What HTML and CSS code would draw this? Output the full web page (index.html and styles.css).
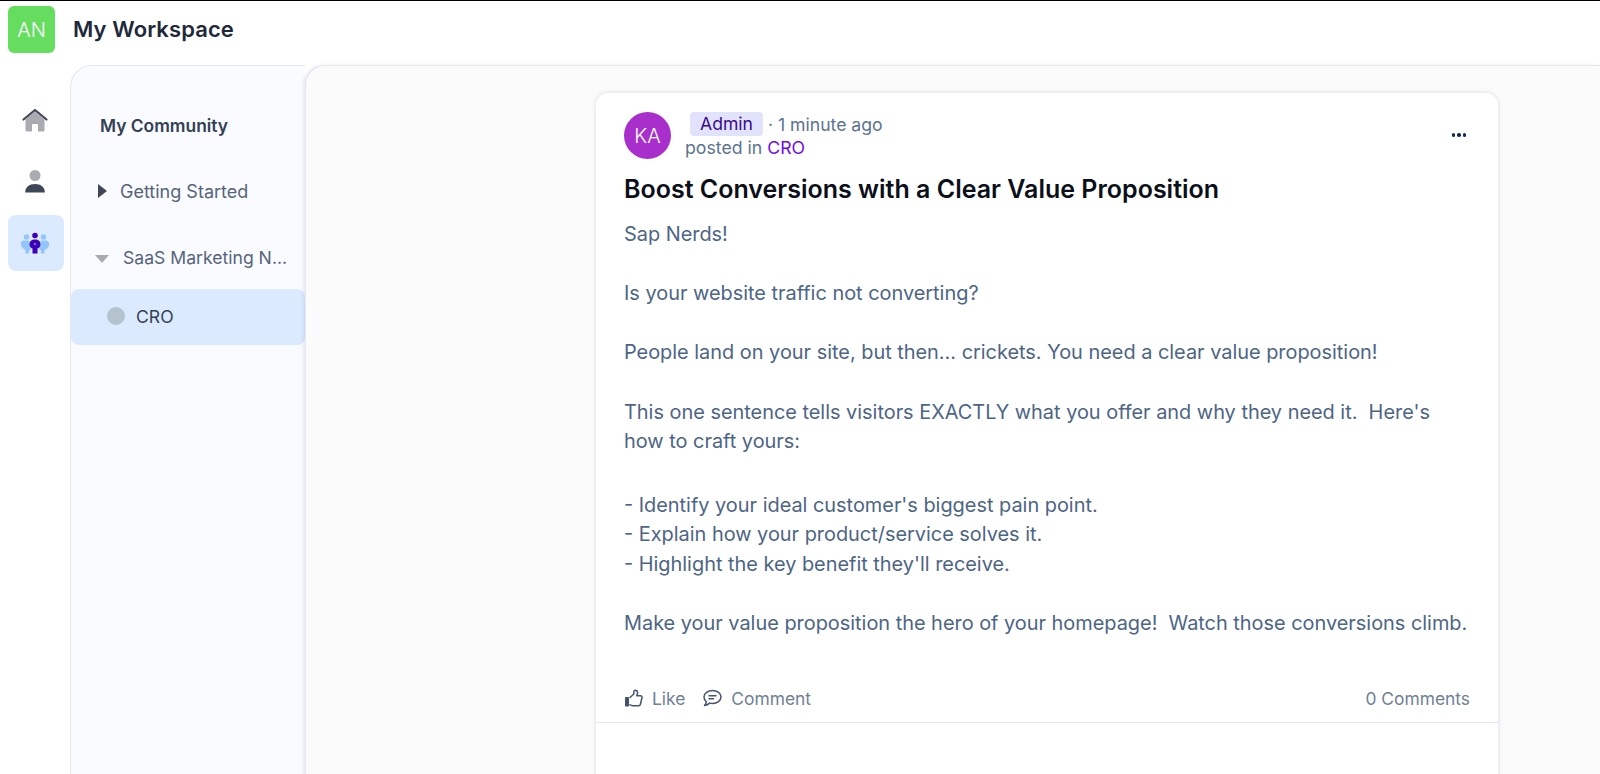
FILE: index.html
```html
<!DOCTYPE html>
<html lang="en">
<head>
<meta charset="utf-8">
<title>My Workspace</title>
<link rel="stylesheet" href="styles.css">
</head>
<body>
<header class="topbar">
  <div class="ws-avatar">AN</div>
  <h1 class="ws-title">My Workspace</h1>
</header>
<div class="shell">
  <nav class="rail">
    <a class="rail-item">
      <svg width="30" height="26" viewBox="0 0 30 26"><path d="M5.500 12.500 15 4.500l9.500 8V23a1.500 1.500 0 0 1-1.500 1.500h-5V18a1 1 0 0 0-1-1h-4a1 1 0 0 0-1 1v6.500H7A1.500 1.500 0 0 1 5.500 23z" fill="#a9abb0"/><path d="M3.500 12.500 15 3l11.500 9.500" fill="none" stroke="#3f4656" stroke-width="2.200" stroke-linecap="round" stroke-linejoin="round"/></svg>
    </a>
    <a class="rail-item">
      <svg width="24" height="26" viewBox="0 0 24 26"><circle cx="12" cy="7.500" r="5.500" fill="#a9abb0"/><path d="M2.200 24.500c0-5.500 4-8.500 9.800-8.500s9.800 3 9.800 8.500z" fill="#3f4656"/></svg>
    </a>
    <a class="rail-item rail-active">
      <svg width="30" height="24" viewBox="0 0 30 24"><g fill="#93c5fd"><circle cx="6.500" cy="6" r="2.700"/><circle cx="23.500" cy="6" r="2.700"/><path d="M3 9.500h6l2 9-2 1v3H5.500v-3.500C2.500 17.500.8 15.500.8 12.500.8 11 1.500 10 3 9.500z"/><path d="M27 9.500h-6l-2 9 2 1v3h3.500v-3.500c3-1 4.700-3 4.700-6 0-1.500-.7-2.500-2.200-3z"/></g><g fill="#3f00b5"><circle cx="15" cy="4.500" r="2.800"/><path d="M15 8.500c3.500 0 5.500 2 5.500 4.800 0 2.200-1.200 3.700-3 4.300v4.900h-5v-4.900c-1.800-.6-3-2.100-3-4.300 0-2.800 2-4.800 5.500-4.800z"/></g><circle cx="15" cy="13" r="1.300" fill="#93c5fd" opacity=".5"/></svg>
    </a>
  </nav>
  <aside class="community">
    <h2 class="community-title">My Community</h2>
    <div class="group group-closed">
      <span class="caret-right"></span>
      <span class="group-name">Getting Started</span>
    </div>
    <div class="group group-open">
      <span class="caret-down"></span>
      <span class="group-name">SaaS Marketing N...</span>
    </div>
    <div class="channel">
      <span class="channel-dot"></span>
      <span class="channel-name">CRO</span>
    </div>
  </aside>
  <main class="feed">
    <article class="post">
      <div class="post-head">
        <div class="author-avatar">KA</div>
        <div class="meta">
          <div class="meta-line"><span class="badge">Admin</span><span class="time">· 1 minute ago</span></div>
          <div class="posted">posted in <span class="channel-link">CRO</span></div>
        </div>
        <div class="more"><i></i><i></i><i></i></div>
      </div>
      <h3 class="post-title">Boost Conversions with a Clear Value Proposition</h3>
      <div class="post-body">
        <p>Sap Nerds!</p>
        <p>Is your website traffic not converting?</p>
        <p>People land on your site, but then... crickets. You need a clear value proposition!</p>
        <p>This one sentence tells visitors EXACTLY what you offer and why they need it.&nbsp; Here's how to craft yours:</p>
        <p class="list">- Identify your ideal customer's biggest pain point.<br>- Explain how your product/service solves it.<br>- Highlight the key benefit they'll receive.</p>
        <p>Make your value proposition the hero of your homepage!&nbsp; Watch those conversions climb.</p>
      </div>
      <div class="actions">
        <span class="action">
          <svg width="19" height="19" viewBox="0 0 19 19"><rect x="1" y="8" width="4" height="9.500" rx=".8" fill="#44546f"/><path d="M6 8.500 9.800 5V3c0-1 .6-1.700 1.500-1.700 1.300 0 2.200 1.100 2.200 2.500 0 1-.3 2-.8 3h3.800c1.100 0 1.800 1 1.500 2l-1.600 6.500c-.2.900-1 1.400-1.800 1.400H8.500c-1 0-1.800-.3-2.500-.9" fill="none" stroke="#44546f" stroke-width="1.500" stroke-linejoin="round" stroke-linecap="round"/></svg>
          Like
        </span>
        <span class="action">
          <svg width="19" height="19" viewBox="0 0 19 19"><path d="M9.500 1.500c4.600 0 8.500 2.800 8.500 6.500s-3.900 6.500-8.500 6.500c-1 0-2-.1-2.900-.4-1 1-2.700 2-5.100 2.300.9-1 1.600-2.200 1.800-3.600C1.900 11.600 1 9.900 1 8c0-3.700 3.900-6.500 8.500-6.500z" fill="none" stroke="#44546f" stroke-width="1.500" stroke-linejoin="round"/><path d="M6 6.700h7M6 9.700h4.500" stroke="#44546f" stroke-width="1.500" stroke-linecap="round"/></svg>
          Comment
        </span>
        <span class="count">0 Comments</span>
      </div>
    </article>
  </main>
</div>
</body>
</html>
```
FILE: styles.css
```css
* { box-sizing: border-box; }
html, body { height: 100%; }
body {
  margin: 0;
  height: 774px;
  overflow: hidden;
  background: #fff;
  font-family: Inter, "Liberation Sans", sans-serif;
  font-optical-sizing: none;
  border-top: 1px solid #000;
}
.topbar {
  height: 64px;
  display: flex;
  align-items: flex-start;
  padding: 5px 0 0 8px;
}
.ws-avatar {
  width: 47px;
  height: 47px;
  border-radius: 6px;
  background: #65dd5f;
  color: #fff;
  font-size: 20px;
  font-weight: 300;
  display: flex;
  align-items: center;
  justify-content: center;
}
.ws-title {
  margin: 0 0 0 18px;
  height: 47px;
  line-height: 47px;
  font-size: 22px;
  font-weight: 600;
  color: #1e293b;
  letter-spacing: .1px;
}
.shell {
  display: flex;
  height: 709px;
}
.rail {
  width: 70px;
  flex: none;
  padding: 27px 0 0 8px;
  display: flex;
  flex-direction: column;
}
.rail-item {
  width: 56px;
  height: 56px;
  display: flex;
  align-items: center;
  justify-content: center;
  border-radius: 8px;
  margin-bottom: 5px;
  padding-right: 2px;
}
.rail-active { background: #dbeafe; margin-top: 1px; }
.community {
  width: 235px;
  flex: none;
  background: #fafbfe;
  border: 1px solid #e2e8f0;
  border-bottom: 0;
  border-right: 0;
  border-top-left-radius: 22px;
  padding-top: 50px;
}
.community-title {
  margin: 0 0 0 29px;
  font-size: 17.400px;
  line-height: 20px;
  font-weight: 600;
  color: #334155;
}
.group {
  display: flex;
  align-items: center;
  height: 24px;
  color: #55647c;
}
.group-closed { margin: 43px 0 0 27px; font-size: 18px; }
.group-open { margin: 42px 0 0 24px; font-size: 17.600px; }
.caret-right {
  width: 0;
  height: 0;
  border-left: 9px solid #3f4656;
  border-top: 7.500px solid transparent;
  border-bottom: 7.500px solid transparent;
  margin-right: 13px;
}
.caret-down {
  width: 0;
  height: 0;
  border-top: 8px solid #a9abb0;
  border-left: 7.500px solid transparent;
  border-right: 7.500px solid transparent;
  margin-right: 14px;
  margin-top: 3px;
}
.channel {
  margin-top: 20px;
  height: 56px;
  background: #dbeafe;
  border-radius: 8px;
  display: flex;
  align-items: center;
  padding: 0 0 2px 36px;
}
.channel-dot {
  width: 18px;
  height: 18px;
  border-radius: 50%;
  background: #b5c3cd;
  margin-right: 11px;
}
.channel-name { font-size: 17.600px; color: #334155; }
.feed {
  flex: 1;
  background: #fbfbfc;
  border: 1px solid #e2e8f0;
  border-bottom: 0;
  border-right: 0;
  border-top-left-radius: 20px;
  box-shadow: -2px 0 3px rgba(100, 116, 139, .12);
  padding: 27px 0 0 290px;
  overflow: hidden;
}
.post {
  width: 902px;
  height: 700px;
  background: #fff;
  border-radius: 12px;
  box-shadow: 0 0 5px rgba(15, 23, 42, .14);
}
.post-head {
  display: flex;
  padding: 19px 28px 0;
  position: relative;
  height: 80px;
}
.author-avatar {
  width: 47px;
  height: 47px;
  border-radius: 50%;
  background: #a82fcb;
  color: #fff;
  font-size: 20px;
  font-weight: 300;
  display: flex;
  align-items: center;
  justify-content: center;
  flex: none;
}
.meta { margin-left: 14px; }
.meta-line { display: flex; align-items: center; height: 24px; padding-left: 5px; }
.badge {
  background: #e0e3fb;
  color: #3b0a8f;
  font-size: 17.600px;
  line-height: 24px;
  padding: 0 10px;
  border-radius: 4px;
  margin-right: 5px;
}
.time { font-size: 17.600px; color: #5b7290; }
.posted { font-size: 17.700px; line-height: 24px; color: #5b7290; height: 25px; }
.channel-link { color: #6e0be8; }
.more {
  position: absolute;
  right: 32px;
  top: 40px;
  display: flex;
  gap: 2px;
}
.more i {
  width: 3.500px;
  height: 3.500px;
  border-radius: 50%;
  background: #0f2a5c;
}
.post-title {
  margin: 0;
  padding: 0 28px;
  font-size: 25px;
  line-height: 32px;
  font-weight: 600;
  color: #0b0f19;
}
.post-body {
  padding: 15px 28px 0;
  font-size: 19.900px;
  line-height: 29.600px;
  color: #4d6585;
}
.post-body p { margin: 0 0 29.600px; }
.post-body .list { margin-top: 34px; }
.actions {
  display: flex;
  align-items: center;
  height: 48px;
  margin-top: 36px;
  padding: 0 28px;
  border-bottom: 1px solid #e2e8f0;
  font-size: 17.400px;
  color: #6f7f96;
}
.action { display: flex; align-items: center; gap: 9px; margin-right: 18px; }
.count { margin-left: auto; }
```
